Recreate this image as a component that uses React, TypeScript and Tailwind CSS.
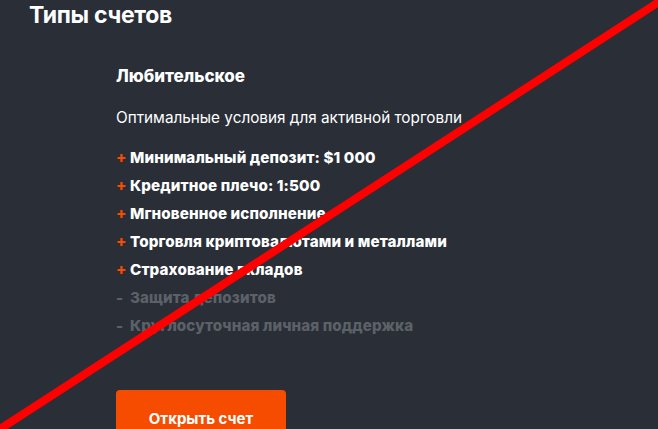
import React from 'react';

const features = [
  { text: 'Минимальный депозит: $1 000', on: true },
  { text: 'Кредитное плечо: 1:500', on: true },
  { text: 'Мгновенное исполнение', on: true },
  { text: 'Торговля криптовалютами и металлами', on: true },
  { text: 'Страхование вкладов', on: true },
  { text: 'Защита депозитов', on: false },
  { text: 'Круглосуточная личная поддержка', on: false },
];

const App = () => {
  return (
    <div className="relative w-[658px] h-[429px] overflow-hidden bg-[#292e37] text-white font-['Inter',sans-serif]">
      <h2 className="pl-[29px] pt-[1px] text-[23px] leading-[28px] font-bold tracking-[-0.3px]">Типы счетов</h2>

      <div className="pl-[116px] pt-[37px]">
        <h3 className="text-[17px] leading-[20px] font-extrabold">Любительское</h3>
        <p className="mt-[22px] text-[15.3px] leading-[20px]">Оптимальные условия для активной торговли</p>

        <ul className="mt-[16px] flex flex-col">
          {features.map((f, i) => (
            <li
              key={i}
              className={`flex items-center h-[28px] text-[15.2px] font-extrabold tracking-[0.1px] ${f.on ? 'text-white' : 'text-[#5c6168]'}`}
            >
              <span className={`w-[14px] ${f.on ? 'text-[#f54c00]' : 'text-[#5c6168]'}`}>{f.on ? '+' : '-'}</span>
              {f.text}
            </li>
          ))}
        </ul>

        <button className="mt-[50px] w-[170px] h-[56px] rounded-[4px] bg-[#f54c00] text-[15px] font-bold text-white flex items-start justify-center pt-[18px]">
          Открыть счет
        </button>
      </div>

      {/* red strike-through overlay */}
      <svg className="absolute inset-0 pointer-events-none" width="658" height="429" viewBox="0 0 658 429">
        <line x1="668" y1="-4" x2="-6" y2="433" stroke="#ff0000" strokeWidth="8" />
      </svg>
    </div>
  );
};

export default App;
